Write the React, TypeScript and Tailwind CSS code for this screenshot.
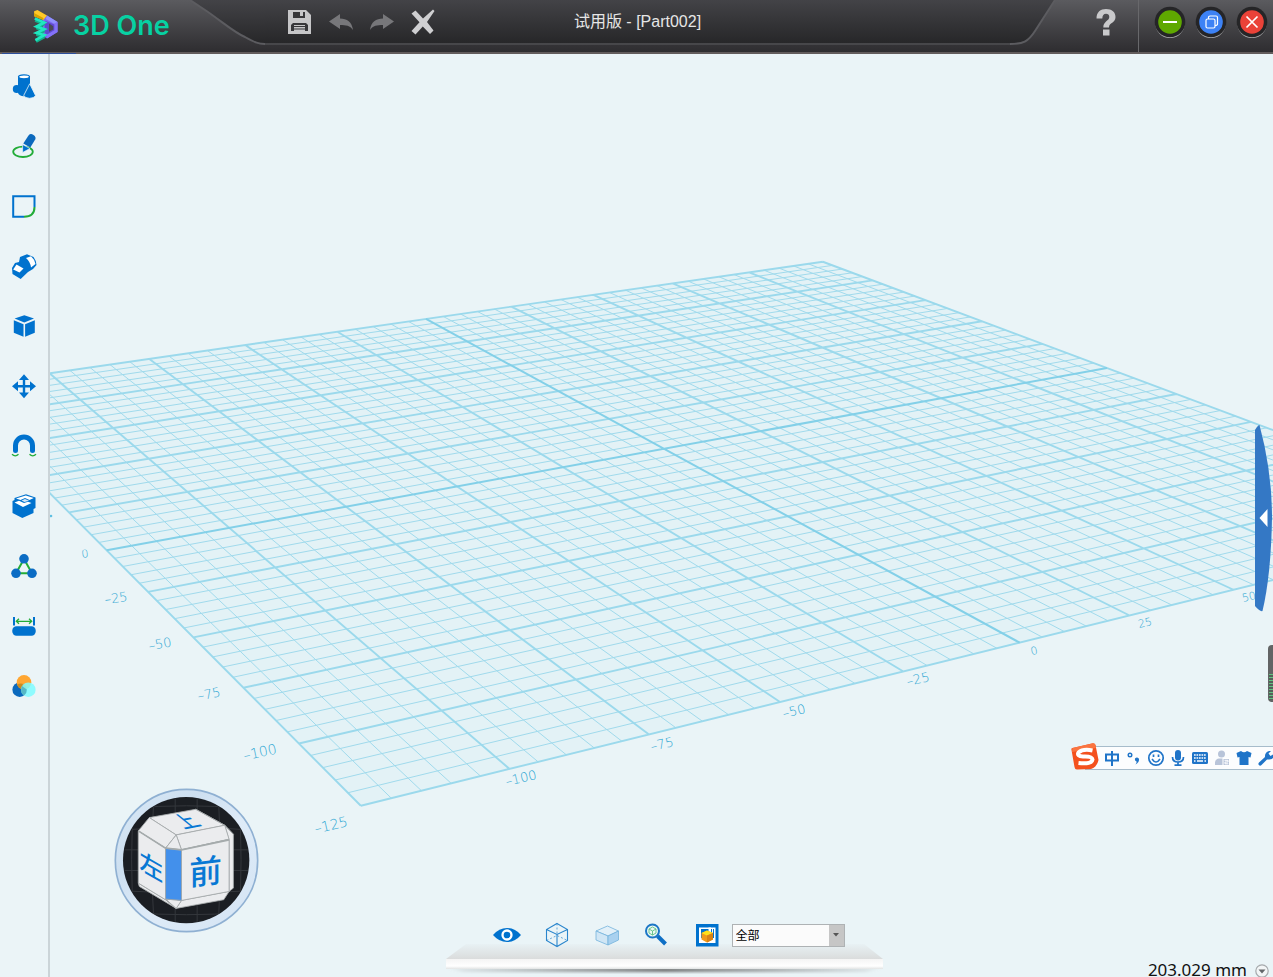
import React from "react";

type IconProps = { className?: string };

const BLUE = "#0072ce";
const GREEN = "#22ac38";

function project(u: number, v: number): [number, number] {
  const w = 1 + 0.11427 * u + 0.19825 * v;
  return [(664 + 569.5 * u - 153.55 * v) / w, (448.75 - 38.68 * u - 66.52 * v) / w];
}

function segment(a: [number, number], b: [number, number]) {
  return `M${a[0].toFixed(2)} ${a[1].toFixed(2)}L${b[0].toFixed(2)} ${b[1].toFixed(2)}`;
}

const steps = Array.from({ length: 51 }, (_, i) => i - 25);
const linesFor = (list: number[]) =>
  list
    .map((i) => segment(project(i / 25, -1), project(i / 25, 1)) + segment(project(-1, i / 25), project(1, i / 25)))
    .join("");
const minorPath = linesFor(steps.filter((i) => i % 5 !== 0));
const majorPath = linesFor(steps.filter((i) => i % 5 === 0 && i !== 0));
const axisPath = linesFor([0]);
const corners = [project(-1, -1), project(1, -1), project(1, 1), project(-1, 1)].map((p) => p.join(",")).join(" ");

const axisLabels = [
  { t: "0", x: 85, y: 554, s: 11, r: -8 },
  { t: "–25", x: 116, y: 598, s: 13, r: -8 },
  { t: "–50", x: 160, y: 644, s: 13, r: -10 },
  { t: "–75", x: 209, y: 694, s: 13, r: -11 },
  { t: "–100", x: 260, y: 752, s: 14, r: -12 },
  { t: "–125", x: 331, y: 825, s: 14, r: -13 },
  { t: "–100", x: 521, y: 778, s: 13, r: -13 },
  { t: "–75", x: 662, y: 744, s: 13, r: -13 },
  { t: "–50", x: 794, y: 711, s: 13, r: -13 },
  { t: "–25", x: 918, y: 679, s: 13, r: -13 },
  { t: "0", x: 1034, y: 651, s: 11, r: -13 },
  { t: "25", x: 1145, y: 623, s: 11, r: -13 },
  { t: "50", x: 1249, y: 597, s: 11, r: -13 },
];

function GridPlane() {
  return (
    <svg className="absolute inset-0 h-full w-full" viewBox="50 54 1223 923" preserveAspectRatio="xMidYMid slice" aria-hidden="true">
      <polygon points={corners} fill="#e3f2f6" />
      <path d={minorPath} stroke="#a0daec" strokeWidth="1" fill="none" />
      <path d={majorPath} stroke="#9bd9ec" strokeWidth="1.900" fill="none" />
      <path d={axisPath} stroke="#83d0e8" strokeWidth="2" fill="none" />
      <circle cx="51" cy="516" r="1.3" fill="#5fc0e2" />
      {axisLabels.map((l) => (
        <text
          key={`${l.x}-${l.y}`}
          x={l.x}
          y={l.y}
          fontSize={l.s}
          textAnchor="middle"
          dominantBaseline="central"
          transform={`rotate(${l.r} ${l.x} ${l.y})`}
          fill="#2ba6d3"
          fontFamily='"DejaVu Sans", sans-serif'
          fontWeight="200"
        >
          {l.t}
        </text>
      ))}
    </svg>
  );
}

function Logo() {
  return (
    <svg viewBox="99 24 78 106" className="h-[35px] w-[26px]" aria-hidden="true">
      <path d="M128 56L141 44L173 63V94L141 113L128 105Z" fill="#7b68f0" />
      <path d="M141 44L173 63L163 69L137 54Z" fill="#8f90ff" />
      <path d="M173 63V94L141 113V101L163 88V69Z" fill="#8371f8" />
      <path d="M137 60L163 71V88L141 101L134 96V62Z" fill="#5f48d0" />
      <path d="M147 68L160 76V86L147 93Z" fill="#4b4a55" />
      <path d="M102 31L112 27L141 44L130 57L102 46Z" fill="#ffc928" />
      <path d="M102 36L130 51V57L102 46Z" fill="#d9a400" />
      <path d="M106 57L132 68L110 80L132 89L110 100L132 107L107 121" stroke="#13b08c" strokeWidth="12" fill="none" strokeLinejoin="bevel" />
      <path d="M104 53L133 65L109 77L133 85L109 96L133 103L106 118" stroke="#1fe8c0" strokeWidth="8" fill="none" />
    </svg>
  );
}

const SaveIcon = () => (
  <svg viewBox="0 0 24 24" className="h-6 w-6" aria-hidden="true">
    <path d="M0 0H18L23 5V24H0Z" fill="#c6c6c8" />
    <path d="M5 2H17V8H5Z" fill="#37373a" />
    <path d="M12 2H15V6H12Z" fill="#c6c6c8" />
    <path d="M5 13H18L20 15V21H3V15Z" fill="#37373a" />
    <path d="M6 15H17V21H6Z" fill="#c6c6c8" />
    <path d="M6 16.5H17M6 19H17" stroke="#37373a" strokeWidth="1" />
  </svg>
);

const UndoIcon = ({ className }: IconProps) => (
  <svg viewBox="0 0 24 16" className={`h-4 w-6 ${className ?? ""}`} aria-hidden="true">
    <path d="M0 7.5L11 0V4.5C18 4.5 23 8 24 16C21 11.500 17 11 11 11V15Z" fill="#77777a" />
  </svg>
);

const CloseDocIcon = () => (
  <svg viewBox="0 0 24 26" className="h-[26px] w-6" aria-hidden="true">
    <path d="M0.500 4.500L4.500 1.500L12 9.500L22 0.500L23.500 2L16 13L22.500 21.500L19 25L11.800 17.500L4.500 25.500L0.500 22L8.500 13.200Z" fill="#cfcfd1" />
  </svg>
);

function WindowButton({ label, fill, children }: { label: string; fill: string; children: React.ReactNode }) {
  return (
    <button type="button" aria-label={label} className="h-8 w-8">
      <svg viewBox="0 0 32 32" className="h-8 w-8" aria-hidden="true">
        <circle cx="16" cy="17.300" r="14.800" fill="#a9a9ab" />
        <circle cx="16" cy="16" r="15.300" fill="#252527" />
        <circle cx="16" cy="16" r="11.800" fill={fill} />
        {children}
      </svg>
    </button>
  );
}

function Header() {
  return (
    <header className="relative flex h-[54px] shrink-0 items-start border-b-2 border-[#625c5c] bg-gradient-to-b from-[#5b5b5f] to-[#2e2d30]">
      <div className="flex h-[52px] w-[190px] shrink-0 items-center gap-[14px] pl-[33px]">
        <Logo />
        <span className="font-['Inter',sans-serif] text-[27px] leading-8 font-semibold whitespace-nowrap text-[#07d1a3]">3D One</span>
      </div>
      <svg viewBox="0 0 75 46" className="h-[46px] w-[75px] shrink-0" aria-hidden="true">
        <defs>
          <linearGradient id="inset" x1="0" y1="0" x2="0" y2="1">
            <stop offset="0" stopColor="#434347" />
            <stop offset="1" stopColor="#272729" />
          </linearGradient>
        </defs>
        <path d="M0 0L18 12C35 24 45 33 55 37C64 42 68 43 75 43V0H0Z" fill="url(#inset)" />
        <path d="M0 0L18 12C35 24 45 33 55 37C64 42 68 44 75 44" fill="none" stroke="#5c5c60" strokeWidth="2" />
      </svg>
      <div className="grid h-[45px] flex-1 grid-cols-[1fr_auto_1fr] items-center border-b-2 border-[#47474a] bg-gradient-to-b from-[#434347] to-[#272729]">
        <div className="flex items-center gap-[17px] pl-[23px]">
          <button type="button" aria-label="保存"><SaveIcon /></button>
          <button type="button" aria-label="撤销"><UndoIcon /></button>
          <button type="button" aria-label="重做"><UndoIcon className="-scale-x-100" /></button>
          <button type="button" aria-label="关闭文档"><CloseDocIcon /></button>
        </div>
        <h1 className="font-['Liberation_Sans','Noto_Sans_CJK_SC',sans-serif] text-[16px] leading-6 whitespace-nowrap text-[#e6e6e6]">试用版 - [Part002]</h1>
        <span />
      </div>
      <svg viewBox="0 0 45 46" className="h-[46px] w-[45px] shrink-0" aria-hidden="true">
        <path d="M0 0H45L25 31C18 41 13 43 0 43Z" fill="url(#inset)" />
        <path d="M45 0L25 31C18 42 13 44 0 44" fill="none" stroke="#5c5c60" strokeWidth="2" />
      </svg>
      <div className="flex h-[52px] w-[218px] shrink-0">
        <button type="button" aria-label="帮助" className="flex h-[44px] w-[83px] items-center justify-center pl-[18px]">
          <svg viewBox="0 0 20 27" className="h-[27px] w-5" aria-hidden="true">
            <path d="M0.500 9.500C0.500 3 4.500 0 10 0C16 0 19.500 3 19.500 8C19.500 14 13 13.500 13 18.500H7.300C7.300 12 13.300 12 13.300 8C13.300 6 12 4.800 10 4.800C7.600 4.800 6.400 6.500 6.300 9.500Z" fill="#c9c9cb" />
            <rect x="7" y="20.500" width="6.500" height="6" fill="#c9c9cb" />
          </svg>
        </button>
        <div className="flex h-[52px] items-start gap-[9px] border-l border-[#68686b] pt-[6px] pl-[15px]">
          <WindowButton label="最小化" fill="#5fa800">
            <path d="M9 16H23" stroke="#fff" strokeWidth="2" />
          </WindowButton>
          <WindowButton label="还原" fill="#3d82f5">
            <g stroke="#fff" strokeWidth="1.200" fill="none">
              <rect x="11" y="13" width="9" height="9" rx="1.500" />
              <path d="M13.500 13V11Q13.500 10 15 10H21Q22.500 10 22.500 11.500V18Q22.500 19.500 20 19.500" />
            </g>
          </WindowButton>
          <WindowButton label="关闭" fill="#ea4238">
            <path d="M10.500 10.500L21.500 21.500M21.500 10.500L10.500 21.500" stroke="#fff" strokeWidth="1.700" />
          </WindowButton>
        </div>
      </div>
      <span className="absolute -bottom-[2px] left-[2px] h-px w-[74px] bg-[#2c4f9c]" />
    </header>
  );
}

const sideTools: { name: string; art: React.ReactNode }[] = [
  {
    name: "基本实体",
    art: (
      <>
        <circle cx="5.700" cy="15" r="3.900" fill={BLUE} />
        <path d="M7 2.500V19Q8 22 13 22.300Q18 22 19 19V2.500Z" fill={BLUE} />
        <ellipse cx="13" cy="2.800" rx="5.500" ry="2" fill="#fff" stroke={BLUE} strokeWidth="1.200" />
        <path d="M18.700 9.800L24.500 21.500Q23 24.300 18.500 24.300Q14 24 12.700 21.500Z" fill={BLUE} stroke="#eaf4f7" strokeWidth=".8" />
      </>
    ),
  },
  {
    name: "草图绘制",
    art: (
      <>
        <ellipse cx="12" cy="17.800" rx="9.800" ry="5.200" fill="none" stroke={GREEN} strokeWidth="1.800" />
        <path d="M11.600 18.500V10.500L19 14.500Z" fill={BLUE} stroke="#eaf4f7" strokeWidth=".7" />
        <path d="M12.300 9.500L17.500 1.500Q19.500 -1 22.500 1Q25.500 3 24.200 5.500L19.300 13.500Z" fill="#0b69bd" />
      </>
    ),
  },
  {
    name: "草图编辑",
    art: (
      <>
        <path d="M23.500 13V2.200H2.200V22.700H13" fill="none" stroke={BLUE} strokeWidth="2" />
        <path d="M23.500 13Q23.500 22.700 13 22.700" fill="none" stroke={GREEN} strokeWidth="2" />
      </>
    ),
  },
  {
    name: "特征造型",
    art: (
      <>
        <path d="M1 14L4 9L8 8L9 3L16 .300L22.500 3Q25.500 7 25.500 11L22 15L17 18L9.700 25L1.500 20Z" fill={BLUE} />
        <path d="M5.500 10.500L12.500 14.500L8.500 18.500L2.200 15.500Z" fill="#fff" />
        <path d="M15 4L20 2.300Q24 6 24.500 10L20 13.500Q19.500 8 15 4Z" fill="#fff" />
      </>
    ),
  },
  {
    name: "特殊功能",
    art: (
      <>
        <path d="M13.300 1.200L23 4.600L13.300 8.400L3.600 4.600Z" fill={BLUE} />
        <path d="M2.800 6.300L12.500 10.300V22.800L2.800 18.800Z" fill={BLUE} />
        <path d="M23.800 6.300L14.100 10.300V22.800L23.800 18.800Z" fill={BLUE} />
      </>
    ),
  },
  {
    name: "基本编辑",
    art: (
      <>
        <path d="M13 4V21M4 12.200H22" stroke={BLUE} strokeWidth="2.400" />
        <path d="M13 .300L18 6H8ZM13 24.300L18 18.500H8ZM1 12.200L7 7.200V17.200ZM25 12.200L19 7.200V17.200Z" fill={BLUE} />
      </>
    ),
  },
  {
    name: "自动吸附",
    art: (
      <>
        <path d="M4.500 16.500V11.500A8.500 8.500 0 0 1 21.500 11.500V16.500" fill="none" stroke={BLUE} strokeWidth="5" strokeLinecap="round" />
        <path d="M1 20.300Q4.300 23.500 7.500 20.300M18.500 20.300Q21.700 23.500 25 20.300" fill="none" stroke={GREEN} strokeWidth="1.300" />
      </>
    ),
  },
  {
    name: "组合编辑",
    art: (
      <>
        <path d="M1.500 7L3.500 6V4L15 .300L24.500 3.500V14L22.500 15V19L11.300 24L1.500 19Z" fill={BLUE} />
        <path d="M3.500 8.500L8 6.700L13 9L17 7.700L20.500 9L12 13Z" fill="#fff" />
        <path d="M5 4.500L14.800 1.500L22.800 4L18.500 6L14 4L9.500 6Z" fill="#fff" />
        <path d="M10.500 6.500L14 5L18 6.800L13.500 8Z" fill="#d5e8f7" />
      </>
    ),
  },
  {
    name: "阵列",
    art: (
      <>
        <path d="M13 5L5 19.300H21Z" fill="none" stroke={GREEN} strokeWidth="2" />
        <circle cx="13" cy="4.800" r="4.800" fill="#0b6cc4" />
        <circle cx="5" cy="19.300" r="4.800" fill="#0b6cc4" />
        <circle cx="21" cy="19.300" r="4.800" fill="#0b6cc4" />
      </>
    ),
  },
  {
    name: "距离测量",
    art: (
      <>
        <rect x="1.300" y="12.300" width="23.400" height="9.400" rx="4.200" fill={BLUE} />
        <path d="M3 3V11.500M23 3V11.500" stroke={BLUE} strokeWidth="2" />
        <path d="M5.500 7.300H20.500M8 4.800L5.300 7.300L8 9.800M18 4.800L20.700 7.300L18 9.800" stroke={GREEN} strokeWidth="1.300" fill="none" />
      </>
    ),
  },
  {
    name: "材质渲染",
    art: (
      <>
        <circle cx="8.700" cy="15.700" r="7.300" fill="#0b69bd" />
        <circle cx="13" cy="8.300" r="7.300" fill="#ffa631" />
        <path d="M6 10.800A7.300 7.300 0 0 1 14.500 11.200A7.300 7.300 0 0 1 15.500 15.200A7.300 7.300 0 0 1 6 10.800Z" fill="#c88b22" />
        <circle cx="17.300" cy="15.700" r="7.300" fill="#7ffcff" fillOpacity=".85" />
        <path d="M11 12A7.300 7.300 0 0 0 13 21.500A7.300 7.300 0 0 0 15.700 15.500Z" fill="#55b8c6" />
      </>
    ),
  },
];

function Sidebar() {
  return (
    <nav aria-label="工具" className="w-[50px] shrink-0 border-r-2 border-[#cbd4d8] bg-[#ebf4f7] pt-[3px]">
      {sideTools.map((tool) => (
        <button key={tool.name} type="button" aria-label={tool.name} className="flex h-[60px] w-full items-center justify-center">
          <svg viewBox="0 0 26 26" className="h-[26px] w-[26px] overflow-visible" aria-hidden="true">
            {tool.art}
          </svg>
        </button>
      ))}
    </nav>
  );
}

function ViewCube() {
  const glyph = { fill: "#0878d4", fontFamily: '"Noto Sans CJK SC", sans-serif', textAnchor: "middle" as const, fontWeight: 500 };
  return (
    <svg viewBox="42 24 436 436" className="absolute bottom-[44px] left-[64px] h-[145px] w-[145px]" role="img" aria-label="视图导航">
      <defs>
        <linearGradient id="ring" x1="0" y1="0" x2="1" y2="1">
          <stop offset="0" stopColor="#dcebf7" />
          <stop offset=".3" stopColor="#cddff0" />
          <stop offset=".55" stopColor="#deebf8" />
          <stop offset="1" stopColor="#d3e3f3" />
        </linearGradient>
        <clipPath id="disc"><circle cx="259" cy="241" r="188" /></clipPath>
      </defs>
      <circle cx="260" cy="242" r="214" fill="url(#ring)" stroke="#8fb0d2" strokeWidth="5" />
      <circle cx="259" cy="241" r="190" fill="#1b1e23" />
      <g clipPath="url(#disc)" fill="none" stroke="#34373c" strokeWidth="3">
        <path d="M70 150Q260 135 450 150M70 210H450M70 272H450M70 333Q260 345 450 333M90 85Q260 70 430 85M90 398Q260 412 430 398" />
        <path d="M102 50Q88 240 102 430M162 50Q150 240 162 430M226 50V430M292 50V430M356 50Q366 240 356 430M418 50Q430 240 418 430" />
      </g>
      <g stroke="#a5abac" strokeWidth="2.500" strokeLinejoin="round" fill="#ebecee">
        <path d="M115 310L197 360L229 386L118 320Z" />
        <path d="M245 362L388 335L372 360L229 386Z" />
        <path d="M197 358L245 362L229 386Z" />
        <path d="M375 136L401 163V325L388 335V180Z" />
        <path d="M148 113L288 88L375 136L229 165Z" />
        <path d="M148 113L229 165L197 205L115 153Z" />
        <path d="M229 165L375 136L388 178L245 210Z" />
        <path d="M115 153L197 205V360L115 310Z" />
        <path d="M245 210L388 178V335L245 362Z" />
        <path d="M229 165L245 210L197 205Z" />
        <path d="M197 205L245 210V362L197 358Z" fill="#4390eb" />
        <path d="M288 88L375 136L401 163" fill="none" />
      </g>
      <path d="M115 153L197 205L245 210L388 180" fill="none" stroke="#a5abac" strokeWidth="5" />
      <text {...glyph} fontSize="72" transform="translate(154 287) skewY(30)">左</text>
      <text {...glyph} fontSize="98" transform="translate(317 311) skewY(-7)">前</text>
      <text {...glyph} fontSize="56" transform="translate(280 141) rotate(-11) skewX(40)">上</text>
    </svg>
  );
}

const viewTools: { name: string; art: React.ReactNode }[] = [
  {
    name: "显示",
    art: (
      <>
        <path d="M0 14Q6 7 14 7Q22 7 28 14Q22 21 14 21Q6 21 0 14Z" fill={BLUE} />
        <circle cx="14" cy="14" r="4.500" fill="none" stroke="#fff" strokeWidth="2.300" />
      </>
    ),
  },
  {
    name: "线框模式",
    art: (
      <g fill="none" stroke="#2b86cd" strokeWidth="1.100">
        <path d="M14 2.500L24.500 8.500V19.500L14 25.500L3.500 19.500V8.500ZM3.500 8.500L14 13.500L24.500 8.500M14 13.500V25.500" />
        <path d="M14 2.500V13.500M3.500 19.500L14 14.500L24.500 19.500" strokeDasharray="2 2" strokeWidth=".7" />
      </g>
    ),
  },
  {
    name: "着色模式",
    art: (
      <g stroke="#74b2dc" strokeWidth=".8">
        <path d="M3 10L14.500 5L25.500 10L15 15Z" fill="#e2f0f8" />
        <path d="M3 10L15 15V24L3 19Z" fill="#d0e6f5" />
        <path d="M25.500 10L15 15V24L25.500 19Z" fill="#a9d1ef" />
      </g>
    ),
  },
  {
    name: "缩放",
    art: (
      <>
        <circle cx="9.500" cy="10" r="6.500" fill="#edf8f4" stroke="#1c77c6" strokeWidth="2" />
        <path d="M9.500 6L13 8V12L9.500 14L6 12V8ZM6 8L9.500 10L13 8M9.500 10V14" fill="none" stroke="#5cbf83" strokeWidth=".9" />
        <path d="M14.500 15L22.500 23" stroke="#0f6fc5" strokeWidth="4" />
      </>
    ),
  },
  {
    name: "渲染显示",
    art: (
      <>
        <rect x="3" y="3" width="22.500" height="22.500" fill={BLUE} />
        <rect x="6" y="6.500" width="16.500" height="15.500" fill="#fff" />
        <path d="M8 8H21V17H8Z" fill={BLUE} />
        <path d="M15.500 6.500H18V11H15.500ZM19 8H20V12H19Z" fill="#fff" />
        <path d="M8.500 12L14 9.500L20 12V18.500L14 21.500L8.500 18.500Z" fill="#f09a1a" />
        <path d="M8.500 12L14 9.500L20 12L14 14.500Z" fill="#ffe11a" />
        <path d="M20 12L14 14.500V21.500L20 18.500Z" fill="#d98216" />
      </>
    ),
  },
];

function ViewShelf() {
  return (
    <div className="absolute inset-x-0 bottom-0 flex justify-center pl-[6px]">
      <div className="relative w-[438px] pb-7">
        <svg viewBox="0 0 438 33" className="absolute inset-x-0 bottom-0 h-[33px] w-full" aria-hidden="true">
          <defs>
            <linearGradient id="shelfTop" x1="0" y1="0" x2="0" y2="1">
              <stop offset="0" stopColor="#e8f1f4" />
              <stop offset="1" stopColor="#dadcdc" />
            </linearGradient>
            <linearGradient id="shelfFront" x1="0" y1="0" x2="0" y2="1">
              <stop offset="0" stopColor="#f4f4f4" />
              <stop offset=".7" stopColor="#ffffff" />
              <stop offset="1" stopColor="#e2e4e4" />
            </linearGradient>
            <linearGradient id="shelfShade" x1="0" y1="0" x2="1" y2="0">
              <stop offset="0" stopColor="#8d9193" stopOpacity=".1" />
              <stop offset=".3" stopColor="#858889" stopOpacity=".8" />
              <stop offset=".5" stopColor="#6d6f70" />
              <stop offset=".7" stopColor="#858889" stopOpacity=".8" />
              <stop offset="1" stopColor="#8d9193" stopOpacity=".1" />
            </linearGradient>
            <filter id="shelfBlur" x="-5%" y="-50%" width="110%" height="200%">
              <feGaussianBlur stdDeviation="1.500" />
            </filter>
          </defs>
          <path d="M2 24H435L420 28H17Z" fill="url(#shelfShade)" filter="url(#shelfBlur)" />
          <path d="M20 0H418L437 15H0Z" fill="url(#shelfTop)" />
          <path d="M0 15H437V25H0Z" fill="url(#shelfFront)" />
        </svg>
        <div className="relative flex items-center gap-[22px] pl-[47px]">
          {viewTools.map((tool) => (
            <button key={tool.name} type="button" aria-label={tool.name} className="h-7 w-7 shrink-0">
              <svg viewBox="0 0 28 28" className="h-7 w-7" aria-hidden="true">{tool.art}</svg>
            </button>
          ))}
          <div className="relative -ml-[11px] h-[23px] w-[113px]">
            <select
              aria-label="过滤器"
              defaultValue="全部"
              className="block h-[23px] w-full appearance-none border border-[#aeb2b4] bg-[#fbfbfb] pl-[3px] font-['Noto_Sans_CJK_SC',sans-serif] text-[12px] leading-[20px] text-black"
            >
              <option>全部</option>
            </select>
            <span className="pointer-events-none absolute inset-y-px right-px flex w-[15px] items-center justify-center bg-[#c6c6c6]">
              <svg viewBox="0 0 6 4" className="h-1 w-[6px]" aria-hidden="true"><path d="M0 0H6L3 3.500Z" fill="#555" /></svg>
            </span>
          </div>
        </div>
      </div>
    </div>
  );
}

const IME = "#1f74c8";
const imeTools: { name: string; art: React.ReactNode }[] = [
  { name: "中文", art: <path d="M3 5.500H15V11.500H3ZM9 2V17" fill="none" stroke={IME} strokeWidth="2" /> },
  {
    name: "标点",
    art: (
      <>
        <circle cx="5" cy="6" r="1.800" fill="none" stroke={IME} strokeWidth="1.400" />
        <path d="M10 9.500Q12 7.500 13.800 9.500Q15 13 10.500 15.500Q12 13.500 11.500 12.500Q9.500 12 10 9.500Z" fill={IME} />
      </>
    ),
  },
  {
    name: "表情",
    art: (
      <>
        <circle cx="9" cy="9" r="7.200" fill="none" stroke={IME} strokeWidth="1.700" />
        <path d="M6.500 5.500V8M11.500 5.500V8" stroke={IME} strokeWidth="1.700" />
        <path d="M5 10Q9 16 13 10" fill="none" stroke={IME} strokeWidth="1.500" />
      </>
    ),
  },
  {
    name: "语音",
    art: (
      <>
        <rect x="6" y="1" width="6" height="10.500" rx="3" fill={IME} />
        <path d="M3.500 8Q3.500 13 9 13Q14.500 13 14.500 8M9 13V16M5.500 16.200H12.500" fill="none" stroke={IME} strokeWidth="1.700" />
      </>
    ),
  },
  {
    name: "软键盘",
    art: (
      <>
        <rect x="1" y="3" width="16" height="12" rx="1.500" fill={IME} />
        <path d="M3 6H15M3 9H15" stroke="#fff" strokeWidth="1.600" strokeDasharray="1.700 .8" />
        <path d="M3 12H4.500M6 12H12M13.500 12H15" stroke="#fff" strokeWidth="1.600" />
      </>
    ),
  },
  {
    name: "账户",
    art: (
      <>
        <circle cx="8.500" cy="5" r="3.500" fill="#b8c4d9" />
        <path d="M2 16V13Q3 9.500 6 9.500H11Q14 9.500 14 12V16Z" fill="#b8c4d9" />
        <rect x="10" y="9.500" width="6.500" height="7" fill="#b8c4d9" stroke="#fff" />
        <path d="M11.500 11.300H15V13H12V14.800H15.300" fill="none" stroke="#fff" />
      </>
    ),
  },
  { name: "皮肤", art: <path d="M6 2Q9 4.500 12 2L16.500 4L15.500 8.500L13.500 8V16H4.500V8L2.500 8.500L1.500 4Z" fill={IME} /> },
  {
    name: "工具箱",
    art: <path d="M2.500 16.500Q.5 15.500 2 13.500L8 8Q7.500 3.500 12 2H14L11.500 4.500L13.500 7L17 4.800Q17.500 10.500 12 10.500H10L4.500 16Q3.500 17 2.500 16.500Z" fill={IME} />,
  },
];

function InputBar() {
  return (
    <div className="absolute right-0 bottom-[207px] flex h-[27px] w-[202px] items-end overflow-hidden">
      <div className="ml-[14px] flex h-6 flex-1 items-center gap-1 border-y border-[#a7bccb] bg-[#fcfdfe] pl-[18px]">
        {imeTools.map((tool) => (
          <button key={tool.name} type="button" aria-label={tool.name} className="h-[18px] w-[18px] shrink-0">
            <svg viewBox="0 0 18 18" className="h-[18px] w-[18px]" aria-hidden="true">{tool.art}</svg>
          </button>
        ))}
      </div>
      <svg viewBox="0 0 28 27" className="absolute top-0 left-0 h-[27px] w-7" aria-hidden="true">
        <path d="M1.500 5Q0 5 .500 7L3.500 24Q4 27 6.500 26.500L20 26Q26 24 27.500 17L24.500 2Q24 .3 22 .300Z" fill="#f4511e" />
        <path d="M1.500 5L22 .3Q24 .3 24.500 2L25 5L1 9Z" fill="#fa7440" />
        <path d="M21.500 7.500Q12 5.500 7.500 9.500Q5.500 13 12 13.500Q21 13 21.500 16.500Q21 21.500 7.500 20" fill="none" stroke="#fff" strokeWidth="4" />
      </svg>
    </div>
  );
}

export default function App() {
  return (
    <div className="flex h-screen flex-col overflow-hidden bg-[#eaf4f7]">
      <Header />
      <div className="flex min-h-0 flex-1">
        <Sidebar />
        <main className="relative min-w-0 flex-1 overflow-hidden">
          <GridPlane />
          <ViewCube />
          <ViewShelf />
          <button type="button" aria-label="展开面板" className="absolute top-[371px] right-0 h-[187px] w-[18px]">
            <svg viewBox="0 0 18 187" className="h-[187px] w-[18px]" aria-hidden="true">
              <path d="M0 5Q3 0 4.500 0Q17 46 17 93Q16 150 7.500 186Q5 187 0 181Z" fill="#3478c5" />
              <path d="M4.500 93L12.500 84V102Z" fill="#fff" />
            </svg>
          </button>
          <div className="absolute top-[591px] right-0 flex h-[57px] w-[5px] flex-col justify-end overflow-hidden rounded-l-[4px] bg-[#626465] pb-[2px] pl-px">
            <div className="h-[26px] bg-[repeating-linear-gradient(to_bottom,#63c281_0px,#63c281_1px,#55605a_1px,#55605a_3px)]" />
          </div>
          <InputBar />
          <div className="absolute right-[4px] bottom-0 flex h-[14px] items-start gap-[8px]">
            <span className="font-['Noto_Sans',sans-serif] text-[17px] leading-[14px] text-[#111]">203.029 mm</span>
            <button type="button" aria-label="单位" className="h-[14px] w-[14px] translate-y-px">
              <svg viewBox="0 0 14 14" className="h-[14px] w-[14px]" aria-hidden="true">
                <circle cx="7" cy="7" r="6.200" fill="#f2f5f6" stroke="#a5a9ac" strokeWidth="1.200" />
                <path d="M3.500 5.500H10.500L7 9.500Z" fill="#626669" />
              </svg>
            </button>
          </div>
        </main>
      </div>
    </div>
  );
}
